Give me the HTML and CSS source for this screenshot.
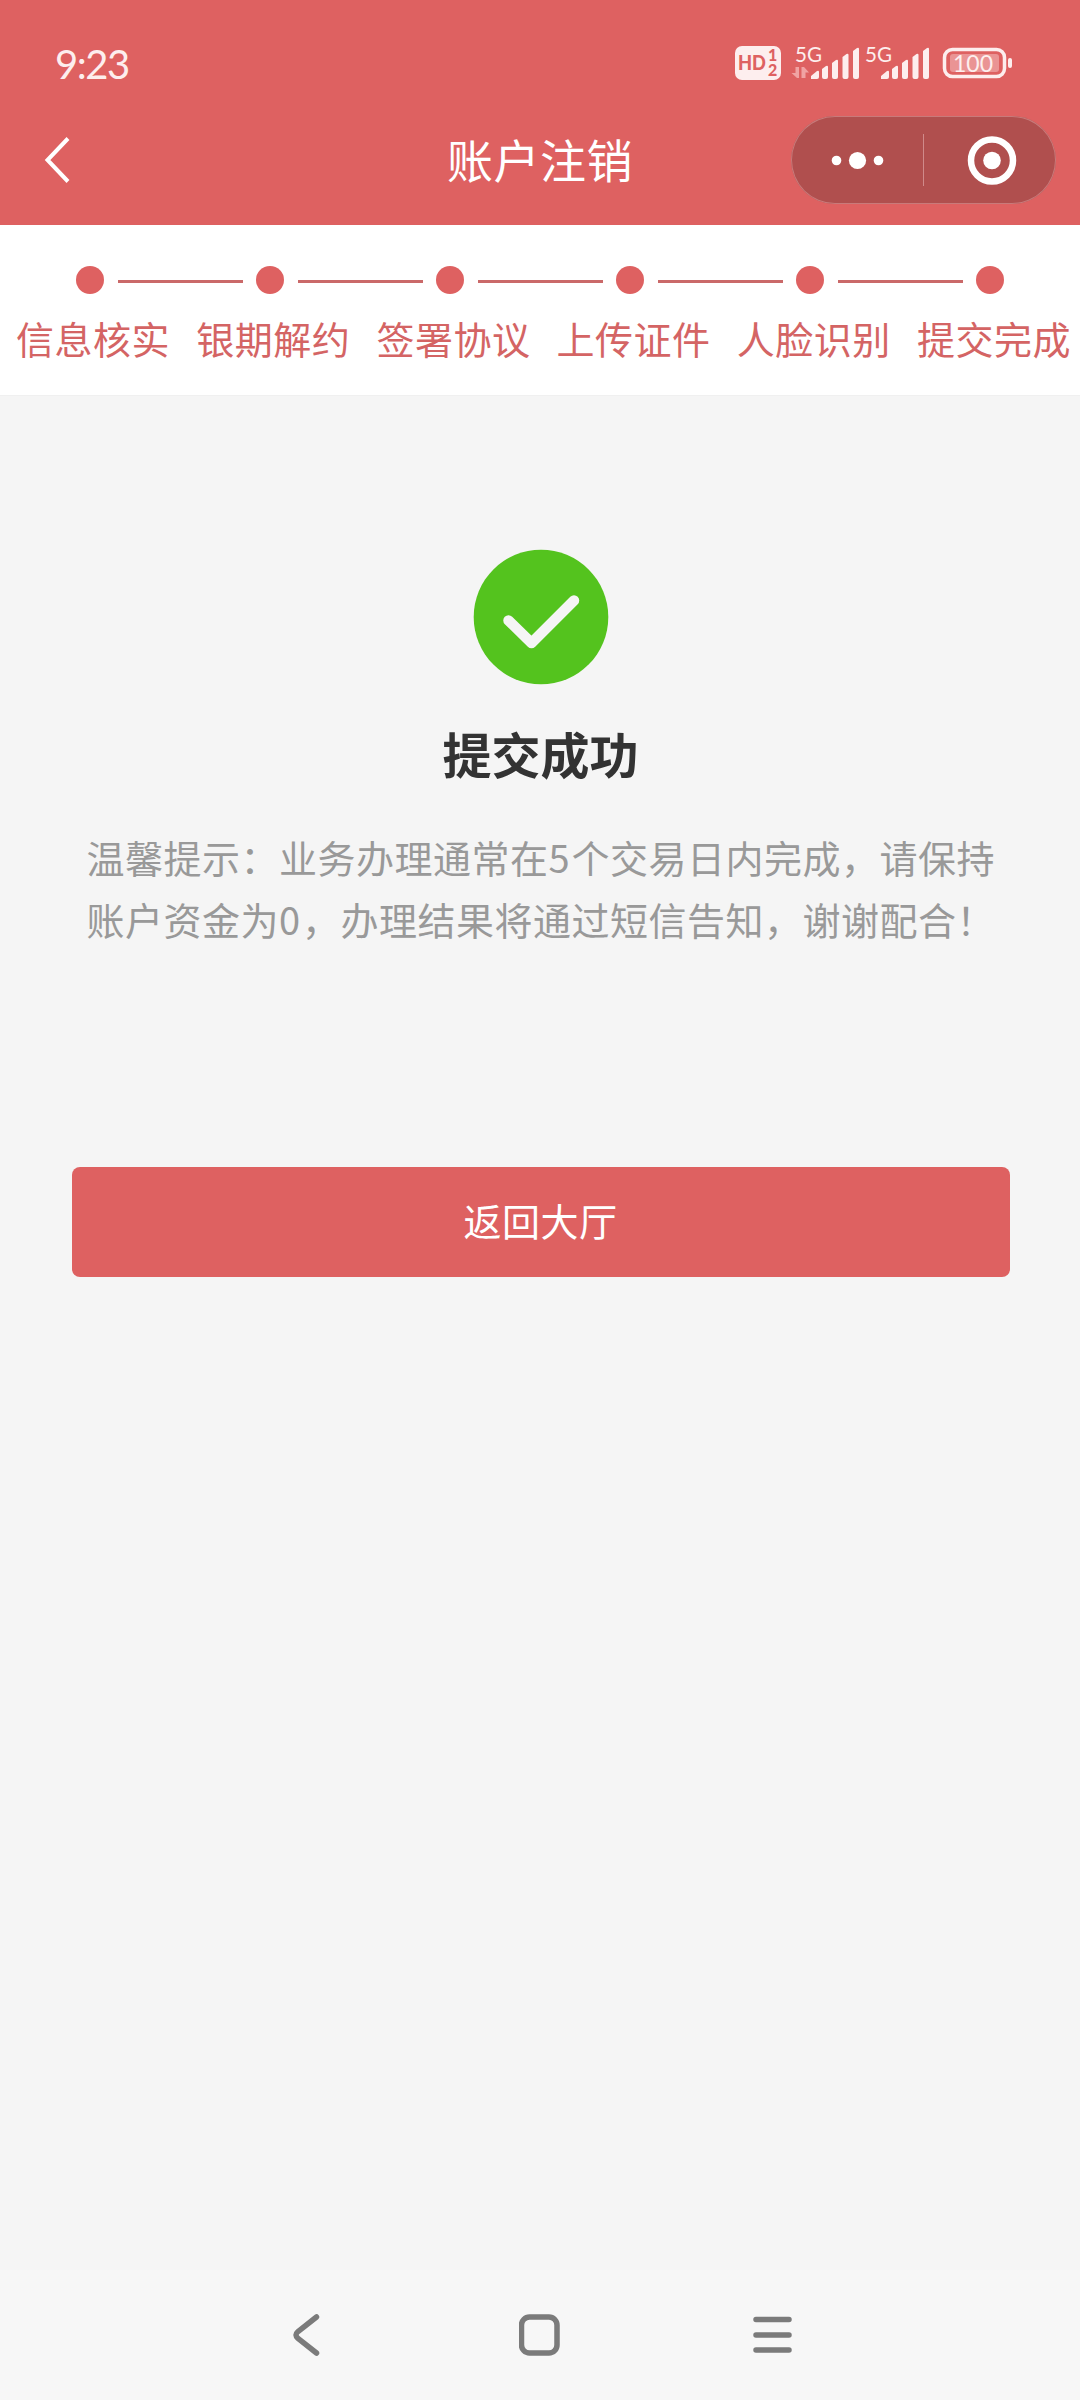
FILE: index.html
```html
<!DOCTYPE html>
<html lang="zh-CN">
<head>
    <meta charset="UTF-8">
    <meta name="viewport" content="width=device-width, initial-scale=1.0">
    <title>账户注销</title>
    <link rel="stylesheet" href="styles.css">
</head>
<body>
    <div class="page">
        <header class="header">
            <div class="status-bar">
                <span class="time">9:23</span>
                <svg class="status-icons" width="280" height="40" viewBox="0 -4 280 40">
                    <!-- HD -->
                    <rect x="0" y="1" width="46" height="34" rx="7" fill="#fdeeee"/>
                    <text class="hd" x="3" y="25" textLength="28" lengthAdjust="spacingAndGlyphs">HD</text>
                    <text class="hd-num" x="33" y="16">1</text>
                    <text class="hd-num" x="33" y="31">2</text>
                    <!-- 信号 1 -->
                    <text class="net" x="60" y="17" textLength="27" lengthAdjust="spacingAndGlyphs">5G</text>
                    <path class="arrows" d="M60.500 22h3.500v11h-2L56.500 28h4zM66.500 33V22h2.500l5 5.500h-3.500V33z"/>
                    <g id="bars" class="bars">
                        <path d="M76 34v-3l6-5q2-1 2 1v5q0 2-2 2z"/>
                        <path d="M87 32v-8l4-3q2-1 2 1v10q0 2-2 2h-2q-2 0-2-2z"/>
                        <path d="M97 32v-14l4-3q2-1 2 1v16q0 2-2 2h-2q-2 0-2-2z"/>
                        <path d="M107.500 32v-20l4-3q2-1 2 1v22q0 2-2 2h-2q-2 0-2-2z"/>
                        <path d="M118 32v-26l4-3q2-1 2 1v28q0 2-2 2h-2q-2 0-2-2z"/>
                    </g>
                    <!-- 信号 2 -->
                    <text class="net" x="130" y="17" textLength="27" lengthAdjust="spacingAndGlyphs">5G</text>
                    <use href="#bars" x="70"/>
                    <!-- 电池 -->
                    <rect x="209.500" y="4.500" width="60" height="27" rx="8" fill="none" stroke="#fdeeee" stroke-width="3.500"/>
                    <rect x="215" y="9" width="49" height="18" rx="3" fill="#ea9494"/>
                    <rect x="273" y="13" width="4" height="10" rx="2" fill="#fdeeee"/>
                    <text class="battery" x="218" y="26.500" textLength="40" lengthAdjust="spacingAndGlyphs">100</text>
                </svg>
            </div>
            <div class="title-bar">
                <svg class="back" width="28" height="48" viewBox="0 0 28 48">
                    <path d="M24 2.500L3.500 24L24 45.500" fill="none" stroke="#fff" stroke-width="4"/>
                </svg>
                <h1>账户注销</h1>
                <div class="capsule">
                    <svg width="264" height="88" viewBox="0 0 264 88">
                        <g fill="#fff">
                            <circle cx="45.500" cy="44.500" r="4.800"/>
                            <circle cx="66.500" cy="44.500" r="8.600"/>
                            <circle cx="87.500" cy="44.500" r="4.800"/>
                            <circle cx="201" cy="44.500" r="8.800"/>
                        </g>
                        <path d="M132.500 18v52" stroke="#d08a8a" stroke-width="1"/>
                        <circle cx="201" cy="44.500" r="21" fill="none" stroke="#fff" stroke-width="6.500"/>
                    </svg>
                </div>
            </div>
        </header>

        <section class="steps">
            <div class="track">
                <i class="dot"></i><i class="line"></i>
                <i class="dot"></i><i class="line"></i>
                <i class="dot"></i><i class="line"></i>
                <i class="dot"></i><i class="line"></i>
                <i class="dot"></i><i class="line"></i>
                <i class="dot"></i>
            </div>
            <div class="labels">
                <span>信息核实</span>
                <span>银期解约</span>
                <span>签署协议</span>
                <span>上传证件</span>
                <span>人脸识别</span>
                <span>提交完成</span>
            </div>
        </section>

        <main class="result">
            <svg class="success-icon" width="136" height="136" viewBox="0 0 136 136">
                <circle cx="68" cy="68" r="67.300" fill="#54c31e"/>
                <path d="M35.500 71.500L58.500 94L101 51.500" fill="none" stroke="#f5f5f5" stroke-width="10.500" stroke-linecap="round" stroke-linejoin="round"/>
            </svg>
            <h2>提交成功</h2>
            <p class="tip">温馨提示：业务办理通常在<span class="num">5</span>个交易日内完成，请保持<br>账户资金为<span class="num">0</span>，办理结果将通过短信告知，谢谢配合！</p>
            <button class="btn">返回大厅</button>
        </main>

        <nav class="nav-bar">
            <svg width="42" height="42" viewBox="0 0 42 42">
                <path d="M31.500 3L13 17.500Q9 21 13 24.500L31.500 39"/>
            </svg>
            <svg width="42" height="42" viewBox="0 0 42 42">
                <rect x="2.500" y="3" width="35.500" height="36" rx="8"/>
            </svg>
            <svg width="42" height="42" viewBox="0 0 42 42">
                <path d="M4 5.500h33M4 21h33M4 36h33"/>
            </svg>
        </nav>
    </div>
</body>
</html>
```
FILE: styles.css
```css
* {
    box-sizing: border-box;
    margin: 0;
    padding: 0;
}
body {
    font-family: "Noto Sans CJK SC", sans-serif;
    background: #f5f5f5;
}
.page {
    display: flex;
    flex-direction: column;
    width: 1080px;
    height: 2400px;
}
.header {
    height: 225px;
    background: #de6161;
}
.status-bar {
    display: flex;
    justify-content: space-between;
    align-items: flex-start;
    height: 116px;
    padding: 41px 65px 0 55px;
}
.time {
    margin-top: 4px;
    font-family: Lato, sans-serif;
    font-size: 40px;
    line-height: 38px;
    letter-spacing: -1.5px;
    color: #fdeeee;
}
.status-icons text {
    font-family: Lato, sans-serif;
    fill: #fdeeee;
}
.status-icons .hd {
    font-size: 20px;
    font-weight: 900;
    fill: #de6161;
}
.status-icons .hd-num {
    font-size: 16px;
    font-weight: 900;
    fill: #de6161;
}
.status-icons .net {
    font-size: 22px;
}
.status-icons .battery {
    font-size: 24px;
}
.arrows {
    fill: #f0a3a3;
}
.bars {
    fill: #fdeeee;
}
.title-bar {
    display: grid;
    grid-template-columns: 289px 1fr 289px;
    align-items: center;
    height: 88px;
}
.back {
    margin-left: 44px;
}
h1 {
    padding-bottom: 5px;
    font-size: 46px;
    font-weight: 400;
    line-height: 60px;
    letter-spacing: 0.5px;
    text-align: center;
    color: #fff;
}
.capsule {
    width: 265px;
    height: 88px;
    border-radius: 44px;
    background: #b04f4e;
    box-shadow: inset 0 0 0 1px #c87a7a;
}
.capsule svg {
    display: block;
}
.steps {
    height: 171px;
    padding-top: 41px;
    background: #fff;
    border-bottom: 1px solid #f0f0f0;
}
.track {
    display: flex;
    align-items: center;
    padding-left: 76px;
}
.dot {
    width: 28px;
    height: 28px;
    border-radius: 50%;
    background: #de6161;
}
.line {
    width: 125px;
    height: 3px;
    margin: 3px 13.1px 0 14px;
    background: #ca6969;
}
.labels {
    display: grid;
    grid-template-columns: repeat(6, 180.2px);
    margin-top: 16px;
    padding-left: 16px;
    font-size: 38px;
    line-height: 56px;
    letter-spacing: 0.5px;
    color: #d46464;
    white-space: nowrap;
}
.result {
    flex: 1;
    display: flex;
    flex-direction: column;
    align-items: center;
    padding: 153px 0 0 1px;
}
h2 {
    margin-top: 33px;
    font-size: 49px;
    font-weight: 700;
    line-height: 70px;
    color: #333;
}
.tip {
    width: 908px;
    margin-top: 38px;
    font-size: 38px;
    line-height: 62px;
    letter-spacing: 0.5px;
    color: #999;
    white-space: nowrap;
}
.num {
    letter-spacing: 2px;
}
.btn {
    width: 938px;
    height: 110px;
    margin-top: 217px;
    padding-bottom: 6px;
    border: none;
    border-radius: 8px;
    background: #de6161;
    font-family: inherit;
    font-size: 38px;
    letter-spacing: 0.5px;
    color: #fff;
}
.nav-bar {
    display: flex;
    justify-content: space-between;
    height: 130px;
    padding: 44px 286px 0 285px;
    background: #f7f7f7;
}
.nav-bar svg {
    fill: none;
    stroke: #7b7b7b;
    stroke-width: 5.5;
    stroke-linecap: round;
}
```
